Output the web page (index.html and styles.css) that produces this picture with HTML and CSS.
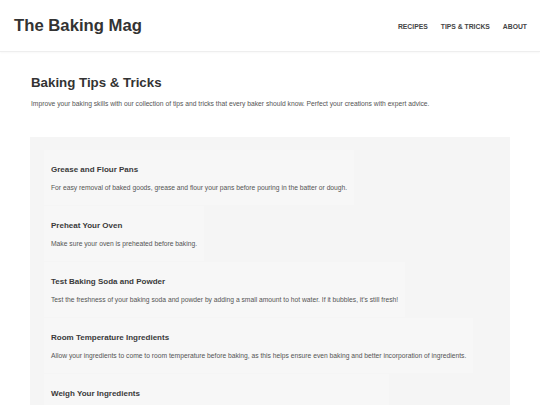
FILE: index.html
```html
<!DOCTYPE html>
<html lang="en">
<head>
<meta charset="utf-8">
<title>The Baking Mag</title>
<link rel="stylesheet" href="styles.css">
</head>
<body>
<header class="site-header">
  <div class="logo">The Baking Mag</div>
  <nav class="nav">
    <a href="#">RECIPES</a>
    <a href="#">TIPS &amp; TRICKS</a>
    <a href="#">ABOUT</a>
  </nav>
</header>
<main class="main">
  <h1 class="page-title">Baking Tips &amp; Tricks</h1>
  <p class="intro">Improve your baking skills with our collection of tips and tricks that every baker should know. Perfect your creations with expert advice.</p>
  <section class="tips">
    <article class="tip">
      <h3>Grease and Flour Pans</h3>
      <p>For easy removal of baked goods, grease and flour your pans before pouring in the batter or dough.</p>
    </article>
    <article class="tip">
      <h3>Preheat Your Oven</h3>
      <p>Make sure your oven is preheated before baking.</p>
    </article>
    <article class="tip">
      <h3>Test Baking Soda and Powder</h3>
      <p>Test the freshness of your baking soda and powder by adding a small amount to hot water. If it bubbles, it's still fresh!</p>
    </article>
    <article class="tip">
      <h3>Room Temperature Ingredients</h3>
      <p>Allow your ingredients to come to room temperature before baking, as this helps ensure even baking and better incorporation of ingredients.</p>
    </article>
    <article class="tip">
      <h3>Weigh Your Ingredients</h3>
      <p>Use a kitchen scale to weigh your ingredients for the most accurate and consistent results every time you bake.</p>
    </article>
  </section>
</main>
</body>
</html>
```
FILE: styles.css
```css
* { box-sizing: border-box; }
html, body { margin: 0; padding: 0; background: #fff; }
body {
  font-family: "Liberation Sans", Arial, sans-serif;
  color: #333;
}
.site-header {
  height: 52px;
  display: flex;
  align-items: center;
  justify-content: space-between;
  padding: 1px 13px 0 14px;
  border-bottom: 1px solid #eeeeee;
  box-shadow: 0 1px 2px rgba(0,0,0,0.03);
}
.logo {
  font-size: 16.7px;
  font-weight: bold;
  color: #333;
}
.nav {
  display: flex;
  gap: 13px;
}
.nav a {
  font-size: 6.8px;
  font-weight: bold;
  color: #444;
  text-decoration: none;
}
.main {
  padding: 23px 30px 0;
}
.page-title {
  margin: 0;
  font-size: 13.3px;
  line-height: 16px;
  color: #333;
  padding-left: 1px;
}
.intro {
  margin: 8px 0 0;
  font-size: 6.72px;
  line-height: 9px;
  color: #555;
  padding-left: 1px;
}
.tips {
  margin-top: 29px;
  background: #f5f5f5;
  padding: 13px 14px;
  display: flex;
  flex-direction: column;
  align-items: flex-start;
  gap: 1px;
}
.tip {
  background: #f7f7f7;
  padding: 7px 7px;
}
.tip h3 {
  margin: 8px 0 8px;
  font-size: 8px;
  line-height: 10px;
  color: #3a3a3a;
}
.tip p {
  margin: 0 0 6px;
  font-size: 6.72px;
  line-height: 9px;
  color: #555;
}
```
